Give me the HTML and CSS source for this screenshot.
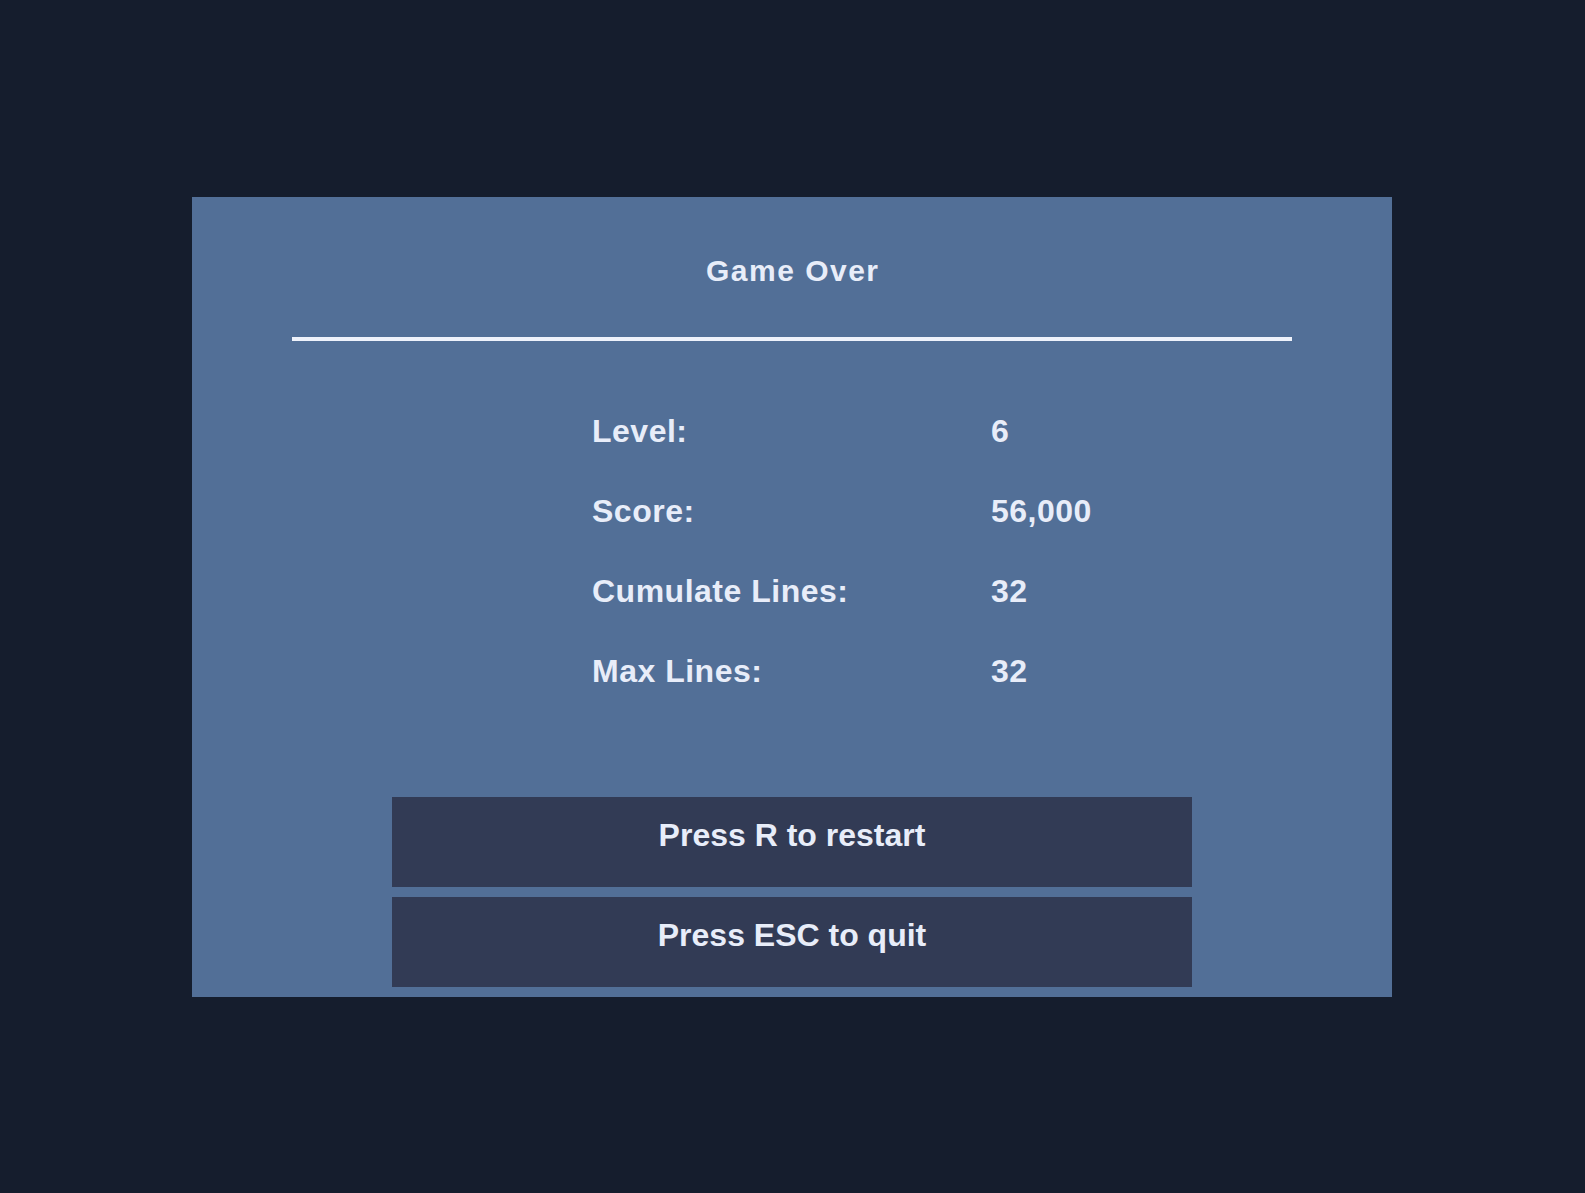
FILE: index.html
```html
<!DOCTYPE html>
<html lang="en">
<head>
<meta charset="utf-8">
<title>Game Over</title>
<link rel="stylesheet" href="styles.css">
</head>
<body>
<main class="screen">
  <section class="panel">
    <h1 class="title">Game Over</h1>
    <div class="divider"></div>
    <dl class="stats">
      <dt class="label">Level:</dt><dd class="value">6</dd>
      <dt class="label">Score:</dt><dd class="value">56,000</dd>
      <dt class="label">Cumulate Lines:</dt><dd class="value">32</dd>
      <dt class="label">Max Lines:</dt><dd class="value">32</dd>
    </dl>
    <div class="actions">
      <div class="action">Press R to restart</div>
      <div class="action">Press ESC to quit</div>
    </div>
  </section>
</main>
</body>
</html>
```

FILE: styles.css
```css
html, body {
  margin: 0;
  padding: 0;
  background: #151d2d;
}
body {
  font-family: "Liberation Sans", Arial, sans-serif;
  font-weight: bold;
  color: #e8edf9;
}
.screen {
  height: 100vh;
  box-sizing: border-box;
  padding-right: 1px;
  display: flex;
  align-items: center;
  justify-content: center;
}
.panel {
  width: 1200px;
  height: 800px;
  background: #526f97;
  display: flex;
  flex-direction: column;
  align-items: center;
  box-sizing: border-box;
}
.title {
  margin: 58px 0 0 0;
  font-size: 30px;
  line-height: 32px;
  font-weight: bold;
  letter-spacing: 1.5px;
  text-indent: 1.5px;
}
.divider {
  margin-top: 50px;
  width: 1000px;
  height: 4px;
  background: #eef2fb;
}
.stats {
  margin: 50px 0 0 0;
  align-self: stretch;
  padding-left: 400px;
  display: grid;
  grid-template-columns: 399px 1fr;
  grid-auto-rows: 80px;
  font-size: 32px;
  line-height: 80px;
  letter-spacing: 0.5px;
}
.label, .value {
  margin: 0;
}
.actions {
  margin-top: 86px;
  display: flex;
  flex-direction: column;
  gap: 10px;
}
.action {
  width: 800px;
  height: 90px;
  box-sizing: border-box;
  padding-top: 20px;
  background: #323b55;
  text-align: center;
  font-size: 32px;
  line-height: 36px;
}
```
